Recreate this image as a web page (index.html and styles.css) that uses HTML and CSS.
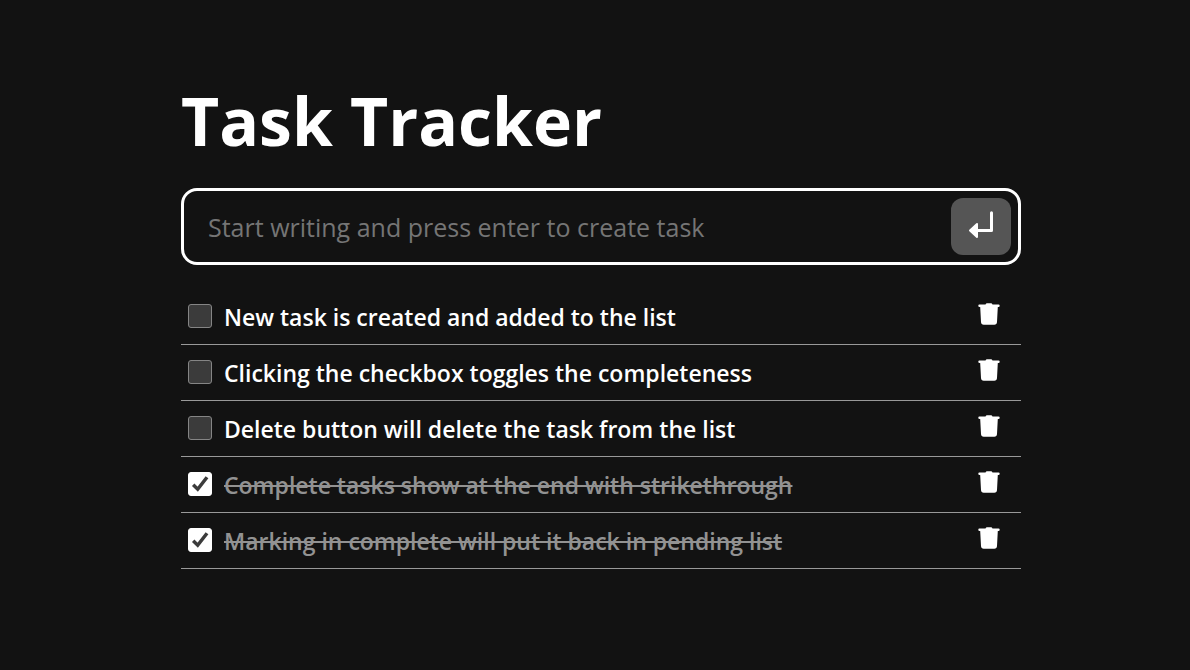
FILE: index.html
```html
<!DOCTYPE html>
<html lang="en">
<head>
<meta charset="utf-8">
<title>Task Tracker</title>
<meta name="viewport" content="width=device-width, initial-scale=1">
<link rel="stylesheet" href="styles.css">
</head>
<body>
<svg class="sprite" aria-hidden="true">
  <symbol id="trash" viewBox="0 0 22 22"><path d="M1.500 1.500H7.500Q8 .2 9 .2H13Q14 .2 14.500 1.500H20.500Q21.700 1.500 21.700 2.700T20.500 4H19.800L19 19Q18.800 21.700 16.300 21.700H5.700Q3.200 21.700 3 19L2.200 4H1.500Q.3 4 .3 2.700T1.500 1.500Z"/></symbol>
  <symbol id="tick" viewBox="0 0 24 24"><path d="M5.200 12.800L9.700 17.200L19 5.200"/></symbol>
</svg>
<main class="tracker">
  <h1 class="title">Task Tracker</h1>
  <form class="entry">
    <input class="entry-input" type="text" aria-label="New task" placeholder="Start writing and press enter to create task">
    <button class="entry-button" type="button" aria-label="Create task">
      <svg class="enter-icon" viewBox="0 0 26 28" aria-hidden="true"><path class="enter-line" d="M23.500 1.800V19.500H8"/><path class="enter-head" d="M2 19.500L9 13V26Z"/></svg>
    </button>
  </form>
  <ul class="tasks">
    <li class="task"><label class="task-label"><span class="box"><input class="check" type="checkbox"><svg class="tick"><use href="#tick"/></svg></span><span class="task-text">New task is created and added to the list</span></label><button class="delete" type="button" aria-label="Delete task"><svg class="trash-icon"><use href="#trash"/></svg></button></li>
    <li class="task"><label class="task-label"><span class="box"><input class="check" type="checkbox"><svg class="tick"><use href="#tick"/></svg></span><span class="task-text">Clicking the checkbox toggles the completeness</span></label><button class="delete" type="button" aria-label="Delete task"><svg class="trash-icon"><use href="#trash"/></svg></button></li>
    <li class="task"><label class="task-label"><span class="box"><input class="check" type="checkbox"><svg class="tick"><use href="#tick"/></svg></span><span class="task-text">Delete button will delete the task from the list</span></label><button class="delete" type="button" aria-label="Delete task"><svg class="trash-icon"><use href="#trash"/></svg></button></li>
    <li class="task done"><label class="task-label"><span class="box"><input class="check" type="checkbox" checked><svg class="tick"><use href="#tick"/></svg></span><span class="task-text">Complete tasks show at the end with strikethrough</span></label><button class="delete" type="button" aria-label="Delete task"><svg class="trash-icon"><use href="#trash"/></svg></button></li>
    <li class="task done"><label class="task-label"><span class="box"><input class="check" type="checkbox" checked><svg class="tick"><use href="#tick"/></svg></span><span class="task-text">Marking in complete will put it back in pending list</span></label><button class="delete" type="button" aria-label="Delete task"><svg class="trash-icon"><use href="#trash"/></svg></button></li>
  </ul>
</main>
</body>
</html>
```
FILE: styles.css
```css
* { box-sizing: border-box; }
body { margin: 0; padding-left: 12px; background: #121212; color: #fff; font-family: "Segoe UI", "Open Sans", "Noto Sans", sans-serif; }
.sprite { position: absolute; width: 0; height: 0; }
.tracker { max-width: 840px; margin: 0 auto; padding: 72px 0; }
.title { margin: 0 0 20px; font-size: 66px; line-height: 96px; font-weight: 700; }
.entry { display: flex; align-items: center; padding: 7px; border: 3px solid #fff; border-radius: 16px; margin: 0 0 24px; }
.entry-input { flex: 1; min-width: 0; height: 57px; padding: 0 17px; border: 0; outline: 0; background: transparent; color: #fff; font: 400 25px "Segoe UI", "Open Sans", "Noto Sans", sans-serif; }
.entry-input::placeholder { color: #757575; }
.entry-button { display: grid; place-items: center; width: 60px; height: 57px; padding: 0 0 3px; border: 0; border-radius: 12px; background: #555; }
.enter-icon { width: 26px; height: 28px; }
.enter-line { fill: none; stroke: #fff; stroke-width: 3; stroke-linecap: round; stroke-linejoin: round; }
.enter-head { fill: #fff; stroke: #fff; stroke-linejoin: round; stroke-width: 2; }
.tasks { list-style: none; margin: 0; padding: 0; }
.task { display: flex; align-items: center; justify-content: space-between; min-height: 56px; padding: 0 20px 0 7px; border-bottom: 1px solid #999; }
.task-label { display: flex; align-items: center; gap: 12px; }
.box { display: grid; flex: none; padding-bottom: 2px; }
.box > * { grid-area: 1 / 1; }
.check { appearance: none; width: 24px; height: 24px; margin: 0; border: 1px solid #858585; border-radius: 3px; background: #3b3b3b; }
.check:checked { border-color: #fff; background: #fff; }
.tick { width: 24px; height: 24px; fill: none; stroke: #3b3b3b; stroke-width: 3.5; pointer-events: none; visibility: hidden; }
.check:checked + .tick { visibility: visible; }
.task-text { font-size: 23px; line-height: 32px; font-weight: 600; }
.done .task-text { color: #929292; text-decoration: line-through 2px; }
.delete { display: flex; padding: 0 0 6px; border: 0; background: none; }
.trash-icon { width: 24px; height: 22px; fill: #fff; }
```
